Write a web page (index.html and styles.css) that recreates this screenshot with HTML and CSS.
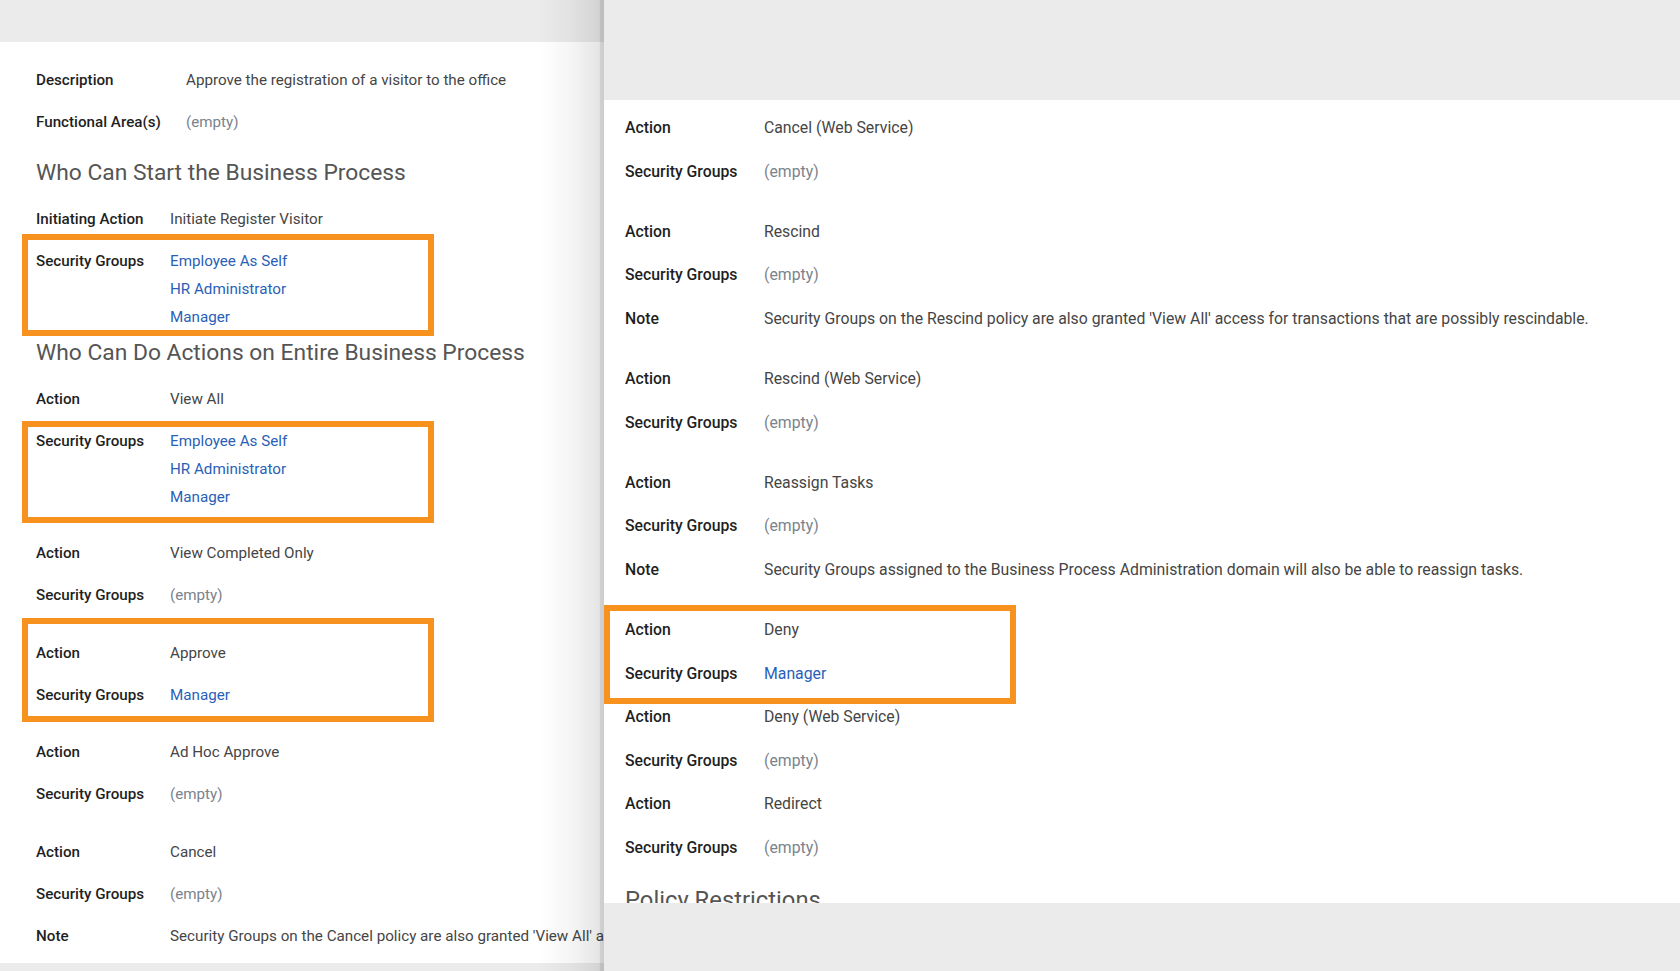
FILE: index.html
```html
<!DOCTYPE html>
<html lang="en">
<head>
<meta charset="utf-8">
<title>Business Process Policy</title>
<link rel="stylesheet" href="styles.css">
</head>
<body>
<div class="canvas">
  <section class="panel panel-left">
    <div class="band band-top-left"></div>
    <div class="sheet sheet-left">
      <div class="fields fields-wide">
        <div class="row"><div class="label">Description</div><div class="value">Approve the registration of a visitor to the office</div></div>
        <div class="row"><div class="label">Functional Area(s)</div><div class="value empty">(empty)</div></div>
      </div>
      <h2 class="heading">Who Can Start the Business Process</h2>
      <div class="group last">
        <div class="row"><div class="label">Initiating Action</div><div class="value">Initiate Register Visitor</div></div>
        <div class="hl hl-a">
          <div class="row"><div class="label">Security Groups</div><div class="value"><a class="link">Employee As Self</a><a class="link">HR Administrator</a><a class="link">Manager</a></div></div>
        </div>
      </div>
      <h2 class="heading">Who Can Do Actions on Entire Business Process</h2>
      <div class="group first">
        <div class="row"><div class="label">Action</div><div class="value">View All</div></div>
        <div class="hl hl-b">
          <div class="row"><div class="label">Security Groups</div><div class="value"><a class="link">Employee As Self</a><a class="link">HR Administrator</a><a class="link">Manager</a></div></div>
        </div>
      </div>
      <div class="group">
        <div class="row"><div class="label">Action</div><div class="value">View Completed Only</div></div>
        <div class="row"><div class="label">Security Groups</div><div class="value empty">(empty)</div></div>
      </div>
      <div class="group hl hl-c">
        <div class="row"><div class="label">Action</div><div class="value">Approve</div></div>
        <div class="row"><div class="label">Security Groups</div><div class="value"><a class="link">Manager</a></div></div>
      </div>
      <div class="group">
        <div class="row"><div class="label">Action</div><div class="value">Ad Hoc Approve</div></div>
        <div class="row"><div class="label">Security Groups</div><div class="value empty">(empty)</div></div>
      </div>
      <div class="group">
        <div class="row"><div class="label">Action</div><div class="value">Cancel</div></div>
        <div class="row"><div class="label">Security Groups</div><div class="value empty">(empty)</div></div>
        <div class="row"><div class="label">Note</div><div class="value nowrap">Security Groups on the Cancel policy are also granted 'View All' access for transactions that are possibly cancelable.</div></div>
      </div>
    </div>
    <div class="band band-bottom-left"></div>
  </section>

  <section class="panel panel-right">
    <div class="band band-top-right"></div>
    <div class="sheet sheet-right">
      <div class="group">
        <div class="row"><div class="label">Action</div><div class="value">Cancel (Web Service)</div></div>
        <div class="row"><div class="label">Security Groups</div><div class="value empty">(empty)</div></div>
      </div>
      <div class="group">
        <div class="row"><div class="label">Action</div><div class="value">Rescind</div></div>
        <div class="row"><div class="label">Security Groups</div><div class="value empty">(empty)</div></div>
        <div class="row"><div class="label">Note</div><div class="value">Security Groups on the Rescind policy are also granted 'View All' access for transactions that are possibly rescindable.</div></div>
      </div>
      <div class="group">
        <div class="row"><div class="label">Action</div><div class="value">Rescind (Web Service)</div></div>
        <div class="row"><div class="label">Security Groups</div><div class="value empty">(empty)</div></div>
      </div>
      <div class="group">
        <div class="row"><div class="label">Action</div><div class="value">Reassign Tasks</div></div>
        <div class="row"><div class="label">Security Groups</div><div class="value empty">(empty)</div></div>
        <div class="row"><div class="label">Note</div><div class="value">Security Groups assigned to the Business Process Administration domain will also be able to reassign tasks.</div></div>
      </div>
      <div class="group tight hl hl-d">
        <div class="row"><div class="label">Action</div><div class="value">Deny</div></div>
        <div class="row"><div class="label">Security Groups</div><div class="value"><a class="link">Manager</a></div></div>
      </div>
      <div class="group tight">
        <div class="row"><div class="label">Action</div><div class="value">Deny (Web Service)</div></div>
        <div class="row"><div class="label">Security Groups</div><div class="value empty">(empty)</div></div>
      </div>
      <div class="group tight">
        <div class="row"><div class="label">Action</div><div class="value">Redirect</div></div>
        <div class="row"><div class="label">Security Groups</div><div class="value empty">(empty)</div></div>
      </div>
      <h2 class="heading heading-cut">Policy Restrictions</h2>
    </div>
    <div class="band band-bottom-right"></div>
  </section>
</div>
</body>
</html>
```

FILE: styles.css
```css
*, *::before, *::after { box-sizing: border-box; }

html, body {
  margin: 0;
  padding: 0;
  width: 1680px;
  height: 971px;
  overflow: hidden;
  background: #ebebeb;
  font-family: Roboto, "Liberation Sans", Arial, sans-serif;
  color: #333;
}

.canvas {
  display: flex;
  width: 1680px;
  height: 971px;
}

.panel {
  display: flex;
  flex-direction: column;
  height: 971px;
}

.panel-left {
  position: relative;
  width: 604px;
  flex: none;
  overflow: hidden;
}

.panel-left::after {
  content: "";
  position: absolute;
  top: 0;
  right: 0;
  bottom: 0;
  width: 66px;
  background: linear-gradient(to right,
    rgba(0,0,0,0) 0%,
    rgba(0,0,0,0.04) 50%,
    rgba(0,0,0,0.10) 93%,
    rgba(0,0,0,0.18) 94%,
    rgba(0,0,0,0.20) 100%);
  pointer-events: none;
}

.panel-right {
  flex: 1;
  min-width: 0;
}

.band { background: #ebebeb; flex: none; }
.band-top-left { height: 42px; }
.band-bottom-left { flex: 1; }
.band-top-right { height: 100px; }
.band-bottom-right { flex: 1; }

.sheet {
  background: #fff;
  overflow: hidden;
  flex: none;
}

.sheet-left {
  height: 921px;
  padding: 17px 0 0 36px;
  font-size: 15.2px;
}

.sheet-right {
  height: 803px;
  padding: 6px 0 0 21px;
  font-size: 15.8px;
}

.row {
  display: flex;
  align-items: flex-start;
}

.label {
  flex: none;
  width: 134px;
  font-weight: 500;
  color: #1f1f1f;
  line-height: 28px;
  padding: 7px 0;
}

.value {
  display: flex;
  flex-direction: column;
  line-height: 28px;
  padding: 7px 0;
  color: #454545;
}

.sheet-right .label {
  width: 139px;
  line-height: 29.6px;
}
.sheet-right .value { line-height: 29.6px; }

.fields-wide .label { width: 150px; }
.fields-wide { margin-bottom: 15px; }

.nowrap { white-space: nowrap; }

.empty { color: #7b838c; }

.link {
  color: #2a5fb8;
  text-decoration: none;
}

.group { margin-bottom: 15.5px; }
.group.first { margin-bottom: 14px; }
.group.last { margin-bottom: 0; }
.sheet-right .group { margin-bottom: 16.5px; }
.sheet-right .group.tight { margin-bottom: 0; }

.heading {
  margin: 0 0 10px;
  font-size: 22.8px;
  line-height: 30px;
  font-weight: 400;
  color: #555;
}
.heading-cut {
  margin-top: 15px;
  font-size: 23.8px;
}

.hl { position: relative; }
.hl::before {
  content: "";
  position: absolute;
  left: -14px;
  width: 412px;
  border: 6px solid #f8921e;
  pointer-events: none;
}
.hl-a::before { top: -6px; bottom: 2px; }
.hl-b::before { top: 1px; bottom: -5px; }
.hl-c::before { top: -14px; bottom: -6px; }
.hl-d::before { left: -21px; top: -3px; bottom: -9px; }
```
